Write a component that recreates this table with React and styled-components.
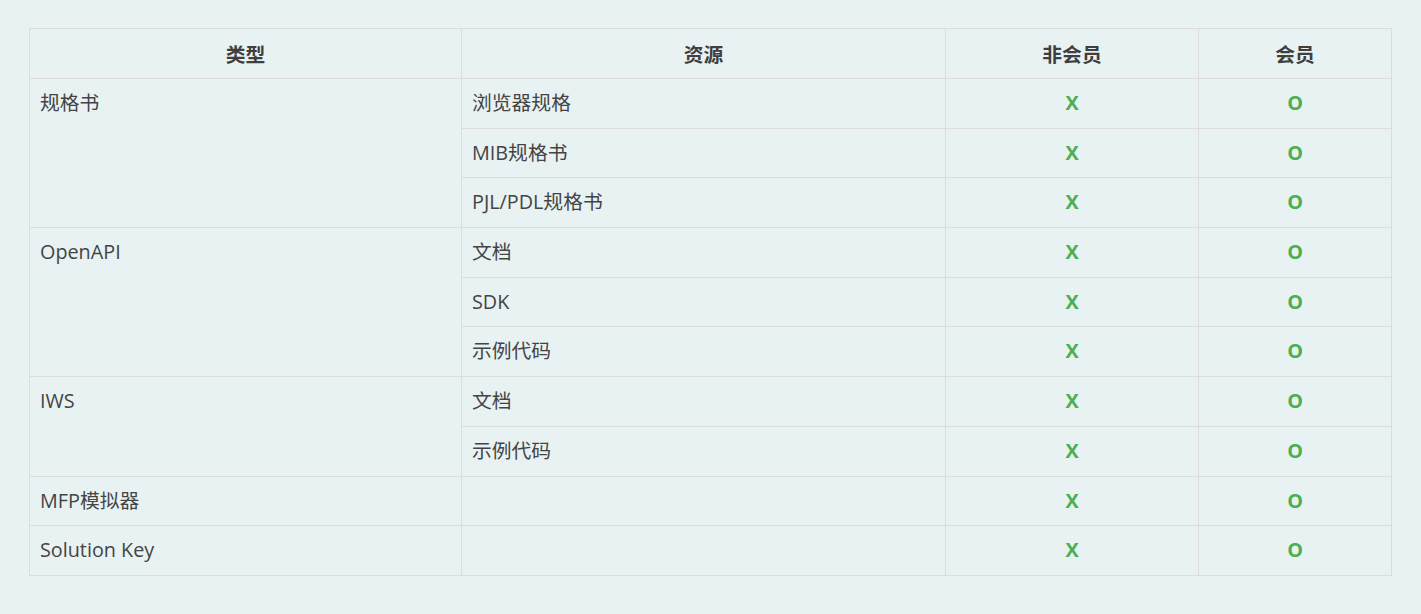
import React from "react";
import styled, { createGlobalStyle } from "styled-components";

const GlobalStyle = createGlobalStyle`
    body {
        margin: 0;
        background: #e8f2f3;
        font-family: "Open Sans", "Noto Sans CJK SC", sans-serif;
        color: #444;
    }
`;

const rows = [
    { type: "规格书", span: 3, res: "浏览器规格" },
    { res: "MIB规格书" },
    { res: "PJL/PDL规格书" },
    { type: "OpenAPI", span: 3, res: "文档" },
    { res: "SDK" },
    { res: "示例代码" },
    { type: "IWS", span: 2, res: "文档" },
    { res: "示例代码" },
    { type: "MFP模拟器", span: 1, res: "" },
    { type: "Solution Key", span: 1, res: "" },
];

const App = () => {
    return (
        <Page>
            <GlobalStyle />
            <Table>
                <colgroup>
                    <col style={{ width: "432px" }} />
                    <col style={{ width: "484px" }} />
                    <col style={{ width: "253px" }} />
                    <col style={{ width: "193px" }} />
                </colgroup>
                <thead>
                    <tr>
                        <Th>类型</Th>
                        <Th>资源</Th>
                        <Th>非会员</Th>
                        <Th>会员</Th>
                    </tr>
                </thead>
                <tbody>
                    {rows.map((r, i) => (
                        <tr key={i}>
                            {r.type && <Td rowSpan={r.span}>{r.type}</Td>}
                            <Td>{r.res}</Td>
                            <Mark>X</Mark>
                            <Mark>O</Mark>
                        </tr>
                    ))}
                </tbody>
            </Table>
        </Page>
    );
};

export default App;

const Page = styled.div`
    padding: 28px 0 0 29px;
`;

const Table = styled.table`
    width: 1362px;
    border-collapse: collapse;
    table-layout: fixed;
    font-size: 19.8px;
`;

const Th = styled.th`
    height: 49px;
    padding: 0 10px;
    border: 1px solid #dcdcdc;
    font-weight: 700;
    text-align: center;
    color: #3f3f3f;
`;

const Td = styled.td`
    height: 49.7px;
    padding: 10px 10px;
    box-sizing: border-box;
    border: 1px solid #dcdcdc;
    vertical-align: top;
    line-height: 28px;
    text-align: left;
`;

const Mark = styled(Td)`
    text-align: center;
    font-weight: 700;
    color: #4caf50;
`;
